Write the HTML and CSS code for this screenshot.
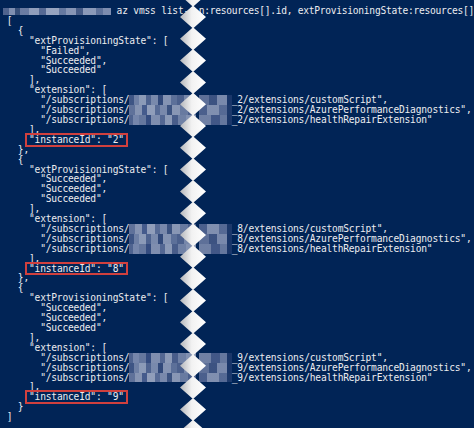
FILE: index.html
```html
<!DOCTYPE html>
<html>
<head>
<meta charset="utf-8">
<link rel="stylesheet" href="styles.css">
</head>
<body>
<div class="term">
<pre class="pane left"><span class="blur prompt"></span> az vmss list-
[
  {
    "extProvisioningState": [
      "Failed",
      "Succeeded",
      "Succeeded"
    ],
    "extension": [
      "/subscriptions/<span class="blur b1"></span>
      "/subscriptions/<span class="blur b2"></span>
      "/subscriptions/<span class="blur b3"></span>
    ],
    <span class="hl">"instanceId": "2"</span>
  },
  {
    "extProvisioningState": [
      "Succeeded",
      "Succeeded",
      "Succeeded"
    ],
    "extension": [
      "/subscriptions/<span class="blur b2"></span>
      "/subscriptions/<span class="blur b1"></span>
      "/subscriptions/<span class="blur b3"></span>
    ],
    <span class="hl">"instanceId": "8"</span>
  },
  {
    "extProvisioningState": [
      "Succeeded",
      "Succeeded",
      "Succeeded"
    ],
    "extension": [
      "/subscriptions/<span class="blur b3"></span>
      "/subscriptions/<span class="blur b1"></span>
      "/subscriptions/<span class="blur b2"></span>
    ],
    <span class="hl">"instanceId": "9"</span>
  }
]</pre>
<pre class="pane right"><span class="cont">n:resources[].id, extProvisioningState:resources[]</span>








<span class="blur r1"></span>_2/extensions/customScript",
<span class="blur r2"></span>_2/extensions/AzurePerformanceDiagnostics",
<span class="blur r3"></span>_2/extensions/healthRepairExtension"










<span class="blur r2"></span>_8/extensions/customScript",
<span class="blur r1"></span>_8/extensions/AzurePerformanceDiagnostics",
<span class="blur r3"></span>_8/extensions/healthRepairExtension"










<span class="blur r3"></span>_9/extensions/customScript",
<span class="blur r1"></span>_9/extensions/AzurePerformanceDiagnostics",
<span class="blur r2"></span>_9/extensions/healthRepairExtension"
</pre>
<svg class="tear" width="30" height="428" viewBox="0 0 30 428">
  <defs>
    <linearGradient id="paper" x1="0" y1="0" x2="1" y2="0">
      <stop offset="0" stop-color="#b4b6ba"/>
      <stop offset="0.45" stop-color="#f2f2f2"/>
      <stop offset="1" stop-color="#ffffff"/>
    </linearGradient>
  </defs>
  <path fill="url(#paper)" d="
    M15 -16.3 L28 -4.8 L15 6.7 L2 -4.8 Z
    M15 5.5 L28 17 L15 28.5 L2 17 Z
    M15 27.3 L28 38.8 L15 50.3 L2 38.8 Z
    M15 49.1 L28 60.6 L15 72.1 L2 60.6 Z
    M15 70.9 L28 82.4 L15 93.9 L2 82.4 Z
    M15 92.7 L28 104.2 L15 115.7 L2 104.2 Z
    M15 114.5 L28 126 L15 137.5 L2 126 Z
    M15 136.3 L28 147.8 L15 159.3 L2 147.8 Z
    M15 158.1 L28 169.6 L15 181.1 L2 169.6 Z
    M15 179.9 L28 191.4 L15 202.9 L2 191.4 Z
    M15 201.7 L28 213.2 L15 224.7 L2 213.2 Z
    M15 223.5 L28 235 L15 246.5 L2 235 Z
    M15 245.3 L28 256.8 L15 268.3 L2 256.8 Z
    M15 267.1 L28 278.6 L15 290.1 L2 278.6 Z
    M15 288.9 L28 300.4 L15 311.9 L2 300.4 Z
    M15 310.7 L28 322.2 L15 333.7 L2 322.2 Z
    M15 332.5 L28 344 L15 355.5 L2 344 Z
    M15 354.3 L28 365.8 L15 377.3 L2 365.8 Z
    M15 376.1 L28 387.6 L15 399.1 L2 387.6 Z
    M15 397.9 L28 409.4 L15 420.9 L2 409.4 Z
    M15 419.7 L28 431.2 L15 442.7 L2 431.2 Z"/>
</svg>
</div>
</body>
</html>
```
FILE: styles.css
```css
html, body {
  margin: 0;
  padding: 0;
  background: #012456;
}

.term {
  position: relative;
  display: flex;
  width: 474px;
  height: 428px;
  box-sizing: border-box;
  padding-top: 6px;
  background: #012456;
  overflow: hidden;
}

.pane {
  margin: 0;
  font-family: "DejaVu Sans Mono", "Liberation Mono", monospace;
  font-size: 9.6px;
  letter-spacing: -0.2px;
  line-height: 9.9px;
  color: #ececf0;
  white-space: pre;
  overflow: hidden;
}

.left {
  flex: 0 0 auto;
  width: 189px;
  padding-left: 6.7px;
}

.right {
  flex: 1 1 auto;
  margin-left: 3px;
}

.cont {
  letter-spacing: -0.27px;
}

.blur {
  display: inline-block;
  height: 9.9px;
  vertical-align: top;
}

.prompt {
  width: 108px;
  height: 7px;
  margin-left: -3.7px;
  vertical-align: -1px;
  opacity: 0.85;
  background: linear-gradient(90deg,
    #5d6f98 0 6%, #95a1c0 6% 11%, #41567f 11% 16%, #7d8bb0 16% 24%,
    #a9b3cd 24% 33%, #65769f 33% 40%, #b2bbd3 40% 52%, #7788ae 52% 58%,
    #9ea9c6 58% 68%, #52658f 68% 74%, #a3aeca 74% 86%, #6f80a7 86% 93%, #939fbf 93% 100%);
}

.b1, .b2, .b3 {
  width: 70px;
  opacity: 0.8;
}

.b1 {
  background: linear-gradient(90deg,
    #4d6190 0 7%, #8a97b9 7% 15%, #aeb8d0 15% 24%, #62739e 24% 31%,
    #97a3c2 31% 42%, #3e5384 42% 48%, #a5afca 48% 60%, #7383aa 60% 69%,
    #5e6f9a 69% 78%, #94a0bf 78% 100%);
}

.b2 {
  background: linear-gradient(90deg,
    #7785ab 0 9%, #a7b0ca 9% 18%, #56699a 18% 26%, #b4bcd3 26% 37%,
    #6d7da6 37% 45%, #97a2c1 45% 55%, #4a5e8b 55% 62%, #aab3cc 62% 73%,
    #8290b3 73% 84%, #5d6e9a 84% 100%);
}

.b3 {
  background: linear-gradient(90deg,
    #62739e 0 6%, #929ec0 6% 14%, #7e8cb0 14% 25%, #41568a 25% 31%,
    #9ea8c5 31% 44%, #6878a2 44% 52%, #aeb7cf 52% 61%, #5a6b97 61% 70%,
    #8b98b9 70% 82%, #a3adc9 82% 100%);
}

.r1, .r2, .r3 {
  width: 33px;
  opacity: 0.8;
}

.r1 {
  background: linear-gradient(90deg, #7583a9 0 30%, #4b5e8c 30% 55%, #97a2c1 55% 85%, #1f3a6e 85% 100%);
}

.r2 {
  background: linear-gradient(90deg, #5d6e9a 0 25%, #a0aac6 25% 60%, #6b7ba4 60% 85%, #243e70 85% 100%);
}

.r3 {
  background: linear-gradient(90deg, #8b97b8 0 35%, #526493 35% 65%, #7e8cb0 65% 85%, #213b6e 85% 100%);
}

.hl {
  display: inline-block;
  margin: -2px -4px;
  padding: 0 2px;
  border: 2px solid #d0403e;
  line-height: 9.9px;
}

.tear {
  position: absolute;
  left: 178px;
  top: 0;
}
```
